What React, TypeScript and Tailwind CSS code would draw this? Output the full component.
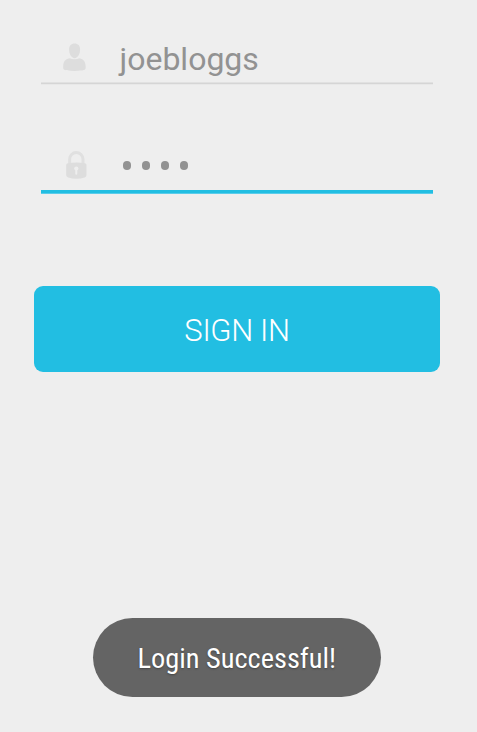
export default function App() {
  return (
    <main className="h-[732px] w-[477px] overflow-hidden bg-[#eeeeee] font-['Roboto',sans-serif]">
      <form>
        <div className="ml-[41px] flex h-[84px] w-[392px] border-b border-[#d5d5d5] pl-[22px] shadow-[0_1px_0_#e8e8e8,inset_0_-1px_0_#e1e1e1]">
          <svg className="mt-[43px] h-7 w-[23px] shrink-0" viewBox="0 0 23 28" fill="#dddddd">
            <path d="M11.6.4C15 .4 17.1 2.6 17.1 6.6c0 4.3-2.3 8.6-5.5 8.6S6.1 10.9 6.1 6.6c0-4 2.1-6.2 5.5-6.2Z" />
            <path d="M6.5 15.2C2.1 16 .2 19 .2 23.1v2c0 1.8 1.7 2.8 11.2 2.8s11.2-1 11.2-2.8v-2c0-4.1-1.9-7.1-6.1-7.9-3 1.5-7 1.5-10 0Z" />
          </svg>
          <span className="mt-[40px] ml-[33.5px] text-[32px] leading-[38px] text-[#929292]">joebloggs</span>
        </div>
        <div className="ml-[41px] flex h-[109px] w-[392px] border-b-[3px] border-[#22bee2] pl-[25px] shadow-[0_1px_0_#5accea]">
          <svg className="mt-[67px] h-7 w-[21px] shrink-0" viewBox="0 0 21 28">
            <path d="M3.6 13V8.2a6.7 6.7 0 0 1 13.4 0V13" fill="none" stroke="#e0e0e0" strokeWidth="3" />
            <path d="M2 12.3q8.3-1.4 16.8 0 1.7.2 1.7 1.8v10.2q0 1.5-1.8 2.2-8.2 2.7-16.6 0Q.2 25.8.2 24.3V14.1q0-1.6 1.8-1.8Z" fill="#dddddd" />
            <circle cx="10.3" cy="17.5" r="2.1" fill="#eeeeee" />
            <path d="M10.3 18v4.8" stroke="#eeeeee" strokeWidth="2" strokeLinecap="round" />
          </svg>
          <div className="mt-[77px] ml-[36px] flex gap-[11px]">
            {[0, 1, 2, 3].map((n) => <i key={n} className="h-[9px] w-2 rounded-full bg-[#929292]" />)}
          </div>
        </div>
        <button type="button" className="mt-[93px] ml-[34px] flex h-[86px] w-[406px] items-center justify-center rounded-[9px] bg-[#22bee2] pt-[5px] text-[31px] font-light tracking-[-0.35px] text-white">SIGN IN</button>
      </form>
      <div className="mt-[246px] ml-[92.5px] flex h-[78.5px] w-[288.5px] items-center justify-center rounded-full bg-[#646464] pt-[4px] text-[28.4px] text-white">
        <span className="font-['Roboto_Condensed','Roboto',sans-serif] [text-shadow:0_1px_2px_#444444]">Login Successful!</span>
      </div>
    </main>
  );
}
